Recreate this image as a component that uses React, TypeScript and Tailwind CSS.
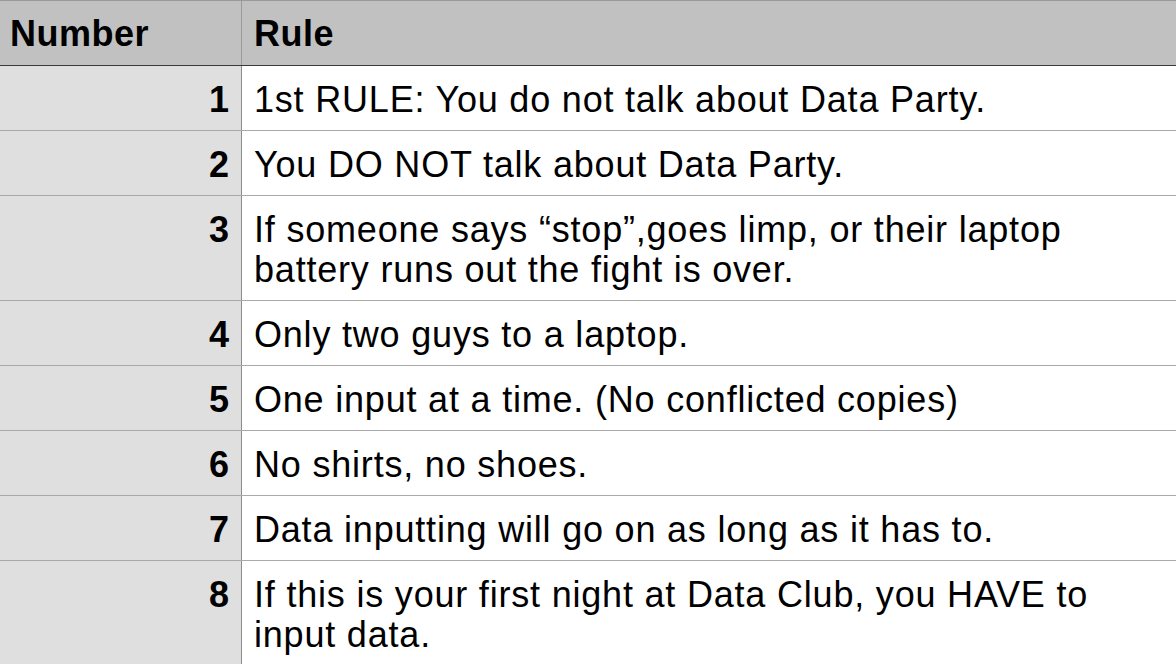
import React from "react";

const rows: [string, string][] = [
  ["1", "1st RULE: You do not talk about Data Party."],
  ["2", "You DO NOT talk about Data Party."],
  ["3", "If someone says “stop”,goes limp, or their laptop battery runs out the fight is over."],
  ["4", "Only two guys to a laptop."],
  ["5", "One input at a time. (No conflicted copies)"],
  ["6", "No shirts, no shoes."],
  ["7", "Data inputting will go on as long as it has to."],
  ["8", "If this is your first night at Data Club, you HAVE to input data."],
];

export default function App() {
  return (
    <div
      className="w-[1176px] h-[664px] overflow-hidden bg-white text-black"
      style={{ fontFamily: '"Liberation Sans", Arial, Helvetica, sans-serif' }}
    >
      <div className="grid grid-cols-[242px_1fr] bg-[#c0c1c0] border-t border-t-[#9a9a9a] border-b border-b-[#3a3a3a] h-[66px]">
        <div className="border-r border-r-[#9a9a9a] pl-[10px] pt-[13px] text-[36px] tracking-[0.5px] leading-[40px] font-bold">
          Number
        </div>
        <div className="pl-[12px] pt-[13px] text-[36px] tracking-[0.5px] leading-[40px] font-bold">Rule</div>
      </div>
      {rows.map(([n, r]) => (
        <div key={n} className="grid grid-cols-[242px_1fr] border-b border-b-[#a9a9a9]">
          <div className="bg-[#dfdfdf] border-r border-r-[#8c8c8c] text-right pr-[12px] pt-[14px] pb-[10px] text-[36px] leading-[40px] font-bold">
            {n}
          </div>
          <div className="pl-[12px] pr-[60px] pt-[14px] pb-[10px] text-[36px] tracking-[0.8px] leading-[40px]">{r}</div>
        </div>
      ))}
    </div>
  );
}
